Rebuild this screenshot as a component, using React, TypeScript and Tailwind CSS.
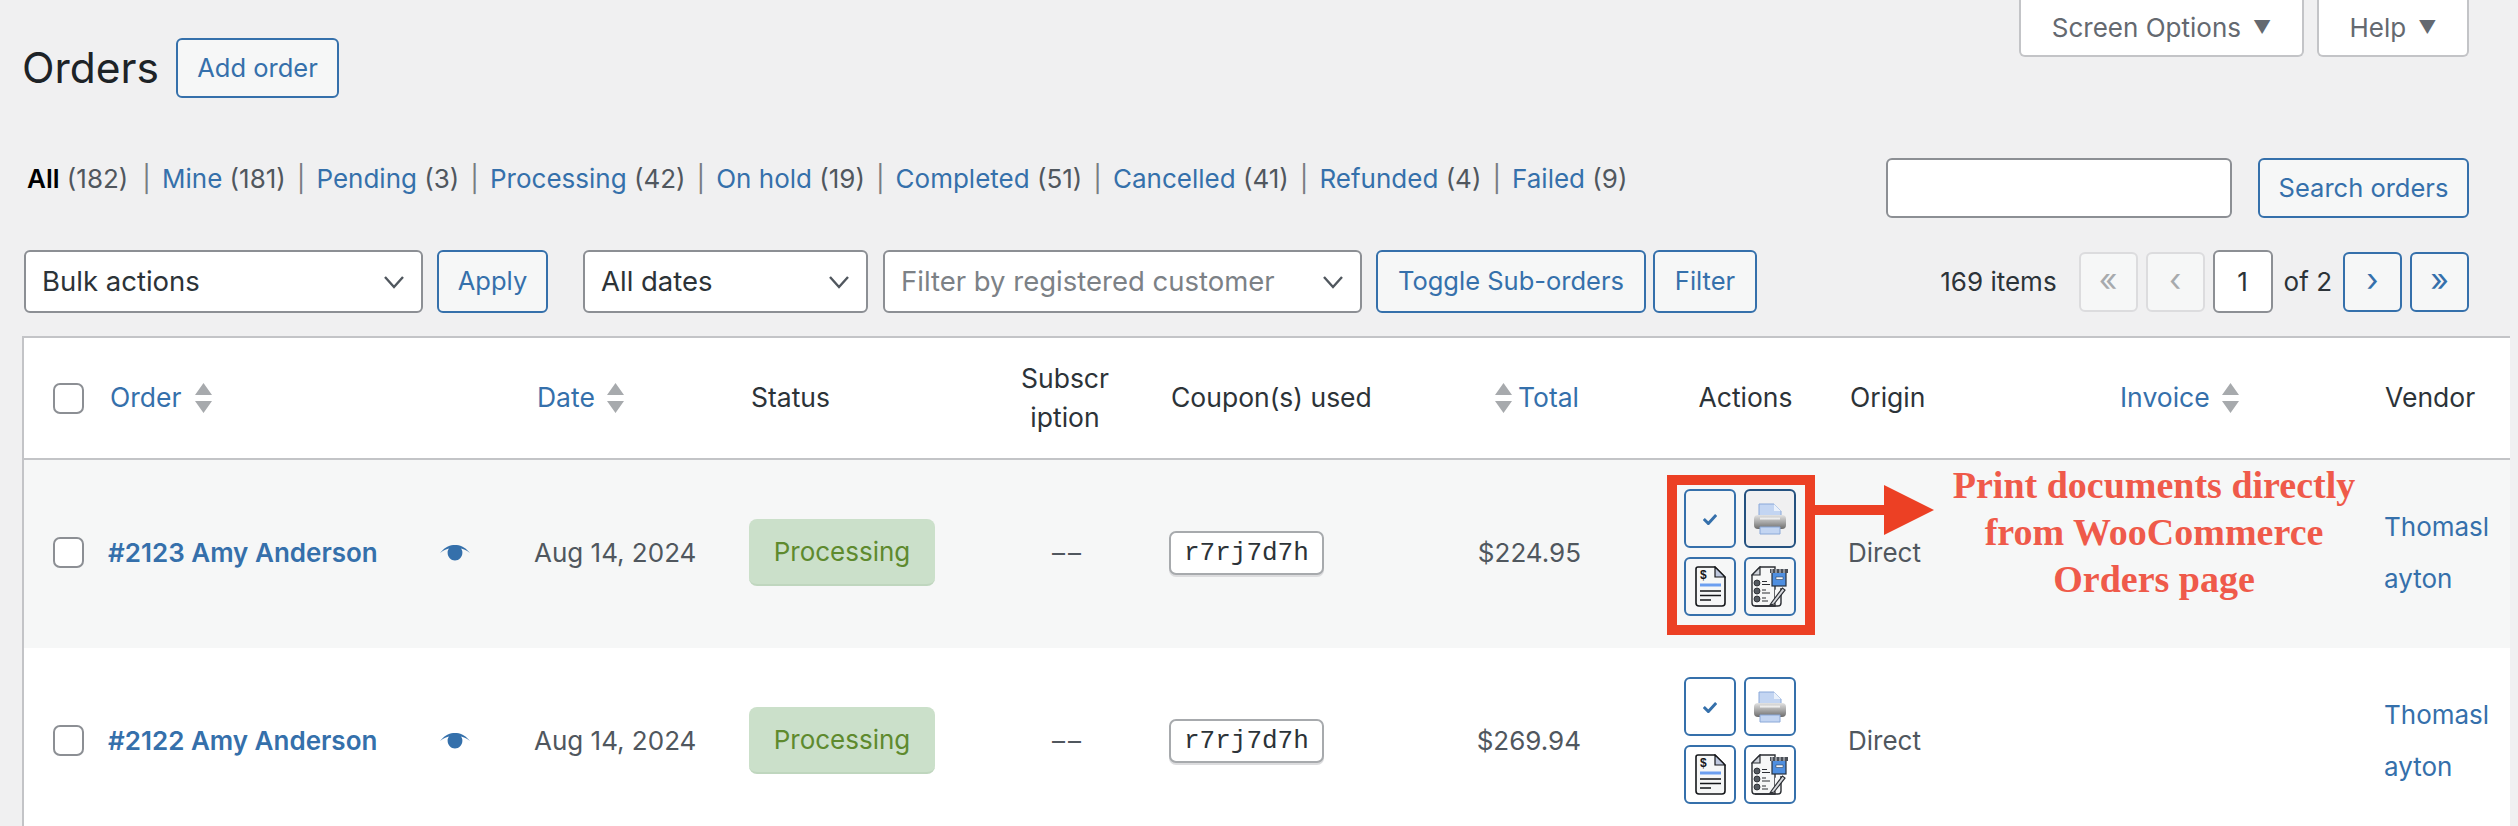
const LINK = "text-[#3570ab]";
const FONT = "font-['Inter',sans-serif]";

function Sort({ className = "" }: { className?: string }) {
  return (
    <svg width="17" height="30" viewBox="0 0 17 30" className={className}>
      <path d="M8.5 0 L17 12 L0 12 Z M0 18 L17 18 L8.5 30 Z" fill="#a7aaad" />
    </svg>
  );
}

function Chevron({ stroke = "#50575e" }: { stroke?: string }) {
  return (
    <svg width="22" height="14" viewBox="0 0 22 14" fill="none">
      <path d="M2 2 L11 12 L20 2" stroke={stroke} strokeWidth="2.4" />
    </svg>
  );
}

function Select({ label, width, muted }: { label: string; width: string; muted?: boolean }) {
  return (
    <div className={`${width} h-[63px] shrink-0 flex items-center justify-between pl-[16px] pr-[16px] bg-white border-2 border-[#8c8f94] rounded-[6px] text-[27.5px] ${muted ? "text-[#7c8186]" : "text-[#2c3338]"}`}>
      <span>{label}</span>
      <Chevron />
    </div>
  );
}

function Btn({ children, width, h = "h-[63px]" }: { children: React.ReactNode; width: string; h?: string }) {
  return (
    <div className={`${width} ${h} shrink-0 flex items-center justify-center bg-[#f6f7f7] border-2 border-[#3570ab] rounded-[6px] text-[25.5px] ${LINK}`}>
      {children}
    </div>
  );
}

function PageBtn({ label, off }: { label: string; off?: boolean }) {
  return (
    <div className={`w-[59px] h-[60px] flex items-center justify-center rounded-[6px] border-2 text-[32px] leading-none pb-1 bg-[#f6f7f7] ${off ? "border-[#dcdcde] text-[#a7aaad]" : "border-[#3570ab] text-[#3570ab]"}`}>
      {label}
    </div>
  );
}

function Check() {
  return <div className="w-[31px] h-[31px] bg-white border-2 border-[#8c8f94] rounded-[7px]" />;
}

function Eye() {
  return (
    <svg width="30" height="16" viewBox="0 0 30 16">
      <path d="M0 8 C6 1 10 0 15 0 C20 0 24 1 30 8 C26 5 23 4 21 3.6 C22 5 22.4 6 22.4 7.5 C22.4 12 19 15.5 15 15.5 C11 15.5 7.6 12 7.6 7.5 C7.6 6 8 5 9 3.6 C7 4 4 5 0 8 Z" fill="#3570ab" />
    </svg>
  );
}

function Printer({ id }: { id: string }) {
  return (
    <svg width="34" height="32" viewBox="0 0 34 32" className="blur-[0.5px]">
      <defs>
        <linearGradient id={id} x1="0" y1="0" x2="0" y2="1">
          <stop offset="0" stopColor="#e2e2e2" />
          <stop offset="0.55" stopColor="#a3a3a3" />
          <stop offset="1" stopColor="#6c6c6c" />
        </linearGradient>
      </defs>
      <path d="M6 1 H21 L28 8 V15 H6 Z" fill="#c3d5f2" stroke="#8aa8d8" strokeWidth="1" />
      <path d="M21 1 V8 H28 Z" fill="#eaf1fb" />
      <rect x="1" y="12" width="32" height="14" rx="4" fill={`url(#${id})`} />
      <rect x="7" y="14.5" width="20" height="2" fill="#eeeeee" />
      <path d="M7 24 H27 V31 H7 Z" fill="#c3d5f2" stroke="#8aa8d8" strokeWidth="1" />
    </svg>
  );
}

function InvoiceDoc() {
  return (
    <svg width="31" height="41" viewBox="0 0 31 41" fill="none">
      <path d="M3 1 H20 L30 11 V37 Q30 40 27 40 H4 Q1 40 1 37 V3 Q1 1 3 1 Z" fill="#f6f7f7" stroke="#15171a" strokeWidth="1.6" />
      <path d="M20 1 L30 11 H20 Z" fill="#bfc8de" stroke="#15171a" strokeWidth="1.2" />
      <text x="5" y="13" fontSize="12" fontWeight="700" fill="#15171a" fontFamily="Liberation Sans, sans-serif">$</text>
      <path d="M5 19 H26" stroke="#6c9ff0" strokeWidth="3" />
      <path d="M5 25 H26 M5 29.5 H26 M5 34 H16" stroke="#15171a" strokeWidth="1.4" />
    </svg>
  );
}

function SlipDoc() {
  return (
    <svg width="38" height="41" viewBox="0 0 38 41" fill="none">
      <path d="M9 1 H24 V40 H4 Q1 40 1 37 V9 Z" fill="#f6f7f7" stroke="#2b2e33" strokeWidth="1.4" />
      <path d="M24 24 V37 Q30 40 30 37 V20" fill="#f6f7f7" />
      <path d="M4 40 H27 Q30 40 30 37 V22" stroke="#2b2e33" strokeWidth="1.4" />
      <path d="M9 1 L1 9 H9 Z" fill="#cfd3da" stroke="#2b2e33" strokeWidth="1.2" />
      <circle cx="6" cy="17" r="3" fill="#555a60" stroke="#1f2226" strokeWidth="0.8" />
      <circle cx="6" cy="25" r="3" fill="#555a60" stroke="#1f2226" strokeWidth="0.8" />
      <circle cx="6" cy="33" r="3" fill="#555a60" stroke="#1f2226" strokeWidth="0.8" />
      <path d="M11 15.5 H16 M11 18.5 H19 M11 24 H15 M11 27 H19 M11 32 H15 M11 35 H17" stroke="#2b2e33" strokeWidth="1.2" />
      <rect x="21" y="6" width="14" height="14" fill="#4f8fe0" stroke="#26303c" strokeWidth="1.2" />
      <path d="M19 3 H37 V7 H19 Z" fill="#4a4f57" />
      <path d="M21 3 V7 M25 3 V7 M29 3 V7 M33 3 V7" stroke="#d5d8dc" strokeWidth="1" />
      <rect x="25" y="11" width="7" height="2.4" fill="#f3f6fb" stroke="#26303c" strokeWidth="0.5" />
      <path d="M21 36 L19 39 L23 38 L34 24 L31.5 22 Z" fill="#d8dade" stroke="#2b2e33" strokeWidth="1.2" />
    </svg>
  );
}

function ActionBtn({ children, hover }: { children: React.ReactNode; hover?: boolean }) {
  return (
    <div className={`w-[52px] h-[59px] flex items-center justify-center rounded-[6px] border-2 ${hover ? "border-[#24517f] bg-[#f0f0f1]" : "border-[#3570ab]"}`}>
      {children}
    </div>
  );
}

const COLS = "grid grid-cols-[74px_422px_215px_265px_155px_175px_267px_233px_172px_368px_142px]";

const ORDERS = [
  { id: "#2123 Amy Anderson", total: "$224.95", bg: "bg-[#f6f7f7]", hover: true },
  { id: "#2122 Amy Anderson", total: "$269.94", bg: "bg-white", hover: false },
];

function Row({ id, total, bg, hover }: (typeof ORDERS)[number]) {
  return (
    <div className={`${COLS} ${bg} h-[188px] pb-[3px] items-center text-[26px] text-[#50575e]`}>
      <div className="pl-[29px]"><Check /></div>
      <div className="pl-[10px] pr-[50px] flex items-center justify-between">
        <span className={`font-semibold ${LINK}`}>{id}</span>
        <Eye />
      </div>
      <div className="pl-[14px]">Aug 14, 2024</div>
      <div className="pl-[14px]">
        <div className="w-[186px] h-[67px] flex items-center justify-center rounded-[8px] bg-[#cbe0ca] border-b-2 border-[#bfd6be] text-[#5e8a2e]">Processing</div>
      </div>
      <div className="text-center pr-[19px] tracking-[3px]">––</div>
      <div className="pl-[14px]">
        <span className="inline-block px-[13px] h-[44px] leading-[40px] bg-white border-2 border-[#a7aaad] rounded-[7px] text-[26px] text-[#2c3338] font-['Liberation_Mono',monospace] shadow-[0_2px_0_#dcdcde]">r7rj7d7h</span>
      </div>
      <div className="text-right pr-[16px]">{total}</div>
      <div className="pl-[87px] grid grid-cols-[52px_52px] gap-x-[8px] gap-y-[9px] w-fit">
        <ActionBtn>
          <svg width="14" height="12" viewBox="0 0 17 14"><path d="M1 7 L6.5 12.5 L16 2" fill="none" stroke="#3570ab" strokeWidth="3.6" /></svg>
        </ActionBtn>
        <ActionBtn hover={hover}><Printer id={`printer-${id.slice(1, 5)}`} /></ActionBtn>
        <ActionBtn><InvoiceDoc /></ActionBtn>
        <ActionBtn><SlipDoc /></ActionBtn>
      </div>
      <div className="pl-[18px]">Direct</div>
      <div />
      <div className={`pl-[14px] break-all leading-[52px] w-[124px] ${LINK}`}>Thomaslayton</div>
    </div>
  );
}

function Annotation() {
  return (
    <div className="absolute left-[1667px] top-[475px] pointer-events-none">
      <div className="w-[148px] h-[160px] border-[10px] border-[#ec4024]" />
      <svg width="120" height="50" viewBox="0 0 120 50" className="absolute left-[148px] top-[10px]">
        <path d="M0 20 H69 V0 L119 25 L69 50 V30 H0 Z" fill="#ec4024" />
      </svg>
      <div className="absolute left-[270px] top-[-13px] w-[434px] text-center text-[38px] leading-[47px] font-bold text-[#ef5a4a] font-['Liberation_Serif',serif]">
        Print documents directly
        <br />
        from WooCommerce
        <br />
        Orders page
      </div>
    </div>
  );
}

export default function App() {
  return (
    <div className={`${FONT} relative w-[2518px] h-[826px] overflow-hidden bg-[#f0f0f1] text-[26px] text-[#2c3338]`}>
      <div className="pl-[24px] pr-[49px]">
        <div className="flex items-start justify-between h-[158px]">
          <div className="flex items-center gap-[17px] pt-[38px]">
            <h1 className="-ml-[2px] text-[42.5px] leading-[60px] text-[#1d2327]">Orders</h1>
            <Btn width="w-[163px]" h="h-[60px]">Add order</Btn>
          </div>
          <div className="flex gap-[13px] text-[#646970]">
            <div className="w-[285px] h-[57px] flex items-center justify-center gap-[12px] bg-white border-2 border-t-0 border-[#c3c4c7] rounded-b-[6px]">
              Screen Options <span className="text-[18px] text-[#646970]">▼</span>
            </div>
            <div className="w-[152px] h-[57px] flex items-center justify-center gap-[12px] bg-white border-2 border-t-0 border-[#c3c4c7] rounded-b-[6px]">
              Help <span className="text-[18px] text-[#646970]">▼</span>
            </div>
          </div>
        </div>

        <div className="flex items-start justify-between h-[92px]">
          <div className="flex items-center pl-[3px] h-[40px] text-[#50575e]">
            {[
              ["All", "(182)"], ["Mine", "(181)"], ["Pending", "(3)"], ["Processing", "(42)"], ["On hold", "(19)"],
              ["Completed", "(51)"], ["Cancelled", "(41)"], ["Refunded", "(4)"], ["Failed", "(9)"],
            ].map(([name, count], i) => (
              <span key={name} className={i === 0 ? "mr-[3px]" : ""}>
                {i > 0 && <span className="text-[#787c82] px-[11px]">|</span>}
                <span className={i === 0 ? "font-semibold text-black" : LINK}>{name}</span> {count}
              </span>
            ))}
          </div>
          <div className="flex gap-[26px]">
            <div className="w-[346px] h-[60px] bg-white border-2 border-[#8c8f94] rounded-[6px]" />
            <Btn width="w-[211px]" h="h-[60px]">Search orders</Btn>
          </div>
        </div>

        <div className="flex items-center h-[63px] mb-[23px]">
          <Select label="Bulk actions" width="w-[399px]" />
          <div className="ml-[14px]"><Btn width="w-[111px]">Apply</Btn></div>
          <div className="ml-[35px]"><Select label="All dates" width="w-[285px]" /></div>
          <div className="ml-[15px]"><Select label="Filter by registered customer" width="w-[479px]" muted /></div>
          <div className="ml-[14px]"><Btn width="w-[270px]">Toggle Sub-orders</Btn></div>
          <div className="ml-[7px]"><Btn width="w-[104px]">Filter</Btn></div>
          <div className="ml-auto flex items-center gap-[8px]">
            <span className="mr-[14px]">169 items</span>
            <PageBtn label="«" off />
            <PageBtn label="‹" off />
            <div className="w-[60px] h-[63px] flex items-center justify-center bg-white border-2 border-[#8c8f94] rounded-[6px]">1</div>
            <span className="mx-[3px]">of 2</span>
            <PageBtn label="›" />
            <PageBtn label="»" />
          </div>
        </div>
      </div>

      <div className="ml-[22px] mr-[8px] border-l-2 border-t-2 border-[#c3c4c7] bg-white">
        <div className={`${COLS} h-[122px] items-center border-b-2 border-[#c3c4c7] text-[26.5px]`}>
          <div className="pl-[29px]"><Check /></div>
          <div className={`pl-[12px] flex items-center gap-[14px] ${LINK}`}>Order <Sort /></div>
          <div className={`pl-[17px] flex items-center gap-[12px] ${LINK}`}>Date <Sort /></div>
          <div className="pl-[16px]">Status</div>
          <div className="w-[90px] ml-[20px] text-center break-all leading-[39px]">Subscription</div>
          <div className="pl-[16px] whitespace-nowrap">Coupon(s) used</div>
          <div className={`flex items-center justify-end gap-[6px] pr-[18px] ${LINK}`}><Sort /> Total</div>
          <div className="text-center pl-[64px]">Actions</div>
          <div className="pl-[20px]">Origin</div>
          <div className={`pl-[118px] flex items-center gap-[12px] ${LINK}`}>Invoice <Sort /></div>
          <div className="pl-[15px]">Vendor</div>
        </div>
        {ORDERS.map((o) => <Row key={o.id} {...o} />)}
      </div>

      <Annotation />
    </div>
  );
}
